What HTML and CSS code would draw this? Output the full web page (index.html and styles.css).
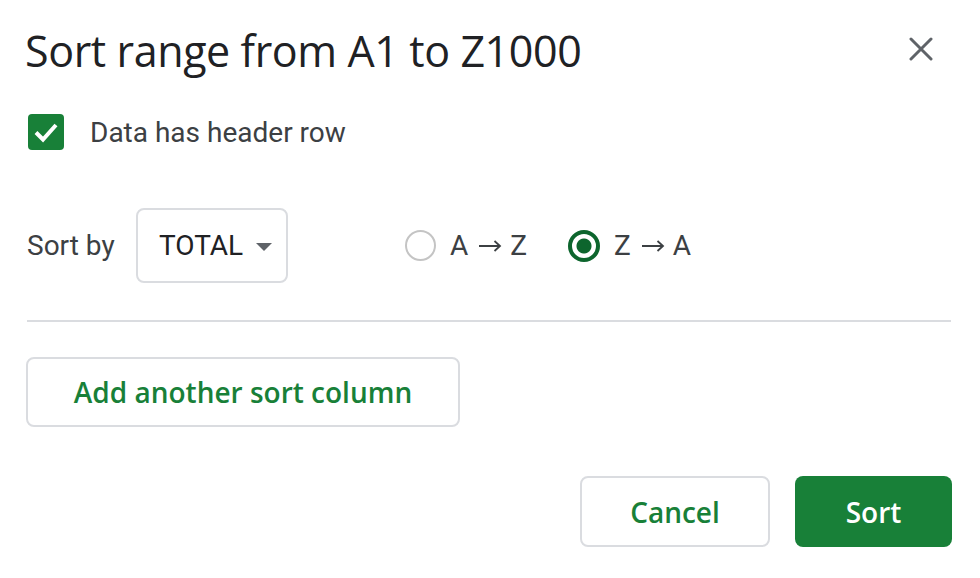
FILE: index.html
```html
<!DOCTYPE html>
<html lang="en">

<head>
  <meta charset="UTF-8">
  <meta name="viewport" content="width=device-width, initial-scale=1.0">
  <title>Sort range</title>
  <link rel="stylesheet" href="styles.css">
</head>

<body>

  <div class="dialog">
    <header class="dialog-header">
      <h1>Sort range from A1 to Z1000</h1>
      <button class="close" aria-label="Close">
        <svg width="24" height="24" viewBox="0 0 24 24">
          <path d="M2 2 L22 22 M22 2 L2 22" stroke="#5f6368" stroke-width="3" stroke-linecap="round" />
        </svg>
      </button>
    </header>

    <label class="check-row">
      <span class="checkbox">
        <svg width="36" height="36" viewBox="0 0 36 36">
          <path d="M8 18.5 L15 25.5 L28 11" fill="none" stroke="#fff" stroke-width="4" />
        </svg>
      </span>
      Data has header row
    </label>

    <div class="sort-row">
      <span class="sort-label">Sort by</span>
      <div class="select">
        <span>TOTAL</span>
        <span class="caret"></span>
      </div>
      <div class="radios">
        <label class="radio">
          <span class="dot"></span>
          <span>A</span>
          <svg class="arrow" width="24" height="14" viewBox="0 0 24 14">
            <path d="M1 7 H22 M16.5 2 L22 7 L16.5 12" fill="none" stroke="#3c4043" stroke-width="1.8" />
          </svg>
          <span>Z</span>
        </label>
        <label class="radio checked">
          <span class="dot"></span>
          <span>Z</span>
          <svg class="arrow" width="24" height="14" viewBox="0 0 24 14">
            <path d="M1 7 H22 M16.5 2 L22 7 L16.5 12" fill="none" stroke="#3c4043" stroke-width="1.8" />
          </svg>
          <span>A</span>
        </label>
      </div>
    </div>

    <hr class="divider">

    <button class="btn outline add">Add another sort column</button>

    <footer class="actions">
      <button class="btn outline cancel">Cancel</button>
      <button class="btn primary">Sort</button>
    </footer>
  </div>

</body>

</html>
```

FILE: styles.css
```css
:root {
  --green: #188038;
  --dark-green: #0d652d;
  --text: #202124;
  --text-2: #3c4043;
  --icon: #5f6368;
  --border: #dadce0;
}

* {
  margin: 0;
  padding: 0;
  box-sizing: border-box;
}

body {
  background: #fff;
  font-family: Roboto, 'Liberation Sans', sans-serif;
  color: var(--text-2);
}

.dialog {
  width: 980px;
  height: 578px;
  padding: 22px 28px 0 25px;
}

.dialog-header {
  display: flex;
  justify-content: space-between;
  align-items: center;
  height: 56px;
}

h1 {
  font-family: 'Open Sans', sans-serif;
  font-weight: 400;
  font-size: 43px;
  color: var(--text);
  letter-spacing: -0.4px;
}

.close {
  background: none;
  border: none;
  width: 24px;
  height: 24px;
  margin-right: 19px;
  margin-top: -3px;
}

.check-row {
  display: flex;
  align-items: center;
  gap: 26px;
  margin-top: 36px;
  font-size: 28px;
  color: var(--text-2);
}

.checkbox {
  width: 36px;
  height: 36px;
  border-radius: 4px;
  background: var(--green);
  display: flex;
  margin-left: 3px;
}

.sort-row {
  display: flex;
  align-items: center;
  margin-top: 58px;
  font-size: 28px;
  padding-left: 1px;
}

.sort-label {
  width: 109px;
  margin-left: 1px;
}

.select {
  width: 152px;
  height: 75px;
  border: 2px solid var(--border);
  border-radius: 8px;
  display: flex;
  align-items: center;
  justify-content: space-between;
  padding: 0 14px 0 21px;
  color: var(--text);
}

.caret {
  width: 0;
  height: 0;
  border-left: 8px solid transparent;
  border-right: 8px solid transparent;
  border-top: 8px solid var(--icon);
  margin-top: 2px;
}

.radios {
  display: flex;
  gap: 41px;
  margin-left: 117px;
}

.radio {
  display: flex;
  align-items: center;
  color: var(--text-2);
}

.radio .dot {
  margin-right: 14px;
}

.arrow {
  margin: 1px 8px 0 10px;
}

.dot {
  width: 31px;
  height: 31px;
  border-radius: 50%;
  border: 2px solid #c4c4c4;
}

.radio.checked .dot {
  width: 32px;
  height: 32px;
  border: 4px solid var(--dark-green);
  background: radial-gradient(circle, var(--dark-green) 0 7px, #fff 8px);
}

.divider {
  border: none;
  border-top: 2px solid var(--border);
  margin-top: 37px;
  margin-left: 2px;
  width: 924px;
}

.btn {
  font-family: 'Open Sans', sans-serif;
  font-weight: 600;
  font-size: 28px;
  border-radius: 8px;
  height: 71px;
  cursor: pointer;
}

.outline {
  background: #fff;
  border: 2px solid var(--border);
  color: var(--green);
}

.add {
  width: 434px;
  height: 70px;
  margin-top: 35px;
  margin-left: 1px;
}

.actions {
  display: flex;
  justify-content: flex-end;
  gap: 25px;
  margin-top: 49px;
}

.cancel {
  width: 190px;
}

.primary {
  width: 157px;
  background: var(--green);
  border: none;
  color: #fff;
}
```
